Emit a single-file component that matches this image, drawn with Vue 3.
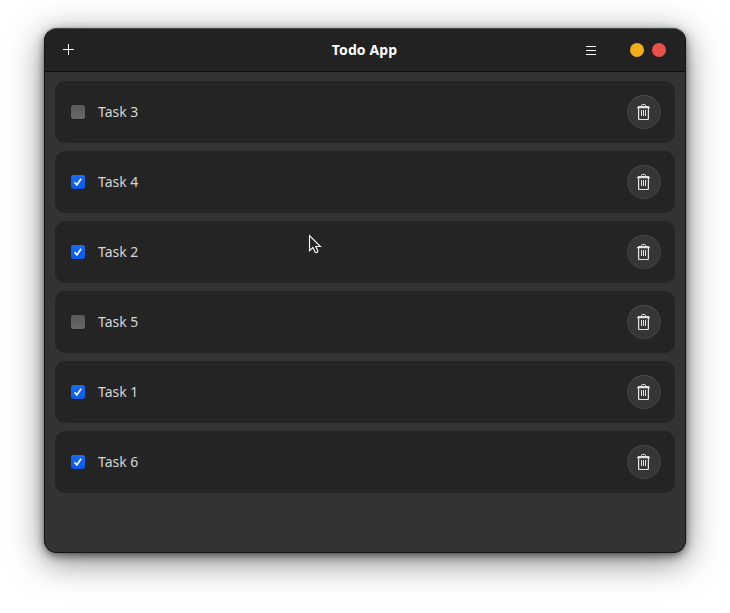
<script setup>
import { ref } from 'vue'

const tasks = ref([
  { name: 'Task 3', done: false },
  { name: 'Task 4', done: true },
  { name: 'Task 2', done: true },
  { name: 'Task 5', done: false },
  { name: 'Task 1', done: true },
  { name: 'Task 6', done: true },
])

function remove(index) {
  tasks.value.splice(index, 1)
}
</script>

<template>
  <div class="desktop">
    <main class="window">
      <header class="header">
        <button class="flat add" aria-label="Add">
          <svg width="11" height="11" viewBox="0 0 11 11"><path d="M5.5 0v11M0 5.5h11" stroke="#fff" /></svg>
        </button>
        <h1 class="title">Todo App</h1>
        <div class="controls">
          <button class="flat menu" aria-label="Menu">
            <svg width="10" height="9" viewBox="0 0 10 9"><path d="M0 .5h10M0 4.5h10M0 8.5h10" stroke="#fff" /></svg>
          </button>
          <button class="dot yellow" aria-label="Minimize"></button>
          <button class="dot red" aria-label="Close"></button>
        </div>
      </header>
      <ul class="list">
        <li v-for="(task, i) in tasks" :key="task.name" class="card">
          <label class="task">
            <input v-model="task.done" type="checkbox" class="native" />
            <span class="check" :class="{ on: task.done }">
              <svg v-if="task.done" width="14" height="14" viewBox="0 0 14 14">
                <path d="M3.6 7.4l2.3 2.5 4.2-6.2" fill="none" stroke="#fff" stroke-width="1.7" />
              </svg>
            </span>
            <span class="name">{{ task.name }}</span>
          </label>
          <button class="trash" aria-label="Delete" @click="remove(i)">
            <svg width="14" height="16" viewBox="0 0 14 16" fill="none" stroke="#e4e4e4">
              <path d="M4.5 2.5v-1q0-1 1-1h2q1 0 1 1v1" />
              <path d="M1 2.5h11" />
              <path d="M0 3.6h13" stroke-width="1.3" />
              <path d="M1.6 4v10.5q0 1 1 1h7.8q1 0 1-1V4" stroke-width="1.2" />
              <path d="M4.5 6v6M6.5 6v6M8.5 6v6" />
            </svg>
          </button>
        </li>
      </ul>
    </main>
    <svg class="cursor" width="14" height="21" viewBox="0 0 14 21">
      <path d="M1.5 1.5v15.2l3.4-3.2 2.2 4.4q1 1.2 2.2.4.9-.7.4-1.7l-2-4.1h4.7z" fill="#242424" stroke="#fff" stroke-width="1.1" />
    </svg>
  </div>
</template>

<style>
body {
  background: #fff;
}
</style>

<style scoped>
.desktop {
  position: relative;
  box-sizing: border-box;
  height: 613px;
  padding: 28px 44px 60px;
  overflow: hidden;
  font-family: "Noto Sans", "Open Sans", sans-serif;
}
.window {
  box-sizing: border-box;
  height: 525px;
  border: 1px solid #151515;
  border-top-color: #454b4a;
  border-radius: 13px;
  overflow: hidden;
  background: #333;
  box-shadow: 0 0 1px rgba(0, 0, 0, 0.5), 0 3px 9px rgba(0, 0, 0, 0.5), 0 8px 34px rgba(0, 0, 0, 0.5);
}
.header {
  box-sizing: border-box;
  height: 43px;
  display: grid;
  grid-template-columns: 1fr auto 1fr;
  align-items: center;
  padding: 0 19px 0 18px;
  background: #222;
  border-bottom: 1px solid #0d0d0d;
}
button {
  display: flex;
  align-items: center;
  justify-content: center;
  padding: 0;
  border: 0;
  background: none;
}
.flat svg {
  display: block;
}
.add {
  justify-self: start;
  padding-bottom: 1px;
}
.title {
  margin: 0;
  color: #fff;
  font-size: 14px;
  font-weight: 700;
  letter-spacing: 0.1px;
  line-height: 20px;
}
.controls {
  display: flex;
  align-items: center;
  justify-content: flex-end;
  gap: 8px;
}
.menu {
  margin-right: 26px;
}
.dot {
  width: 14px;
  height: 14px;
  border-radius: 50%;
}
.yellow {
  background: #f2ae1b;
}
.red {
  background: #ea5149;
}
.list {
  display: flex;
  flex-direction: column;
  gap: 8px;
  margin: 0;
  padding: 9px 10px;
  list-style: none;
}
.card {
  box-sizing: border-box;
  height: 62px;
  display: flex;
  align-items: center;
  justify-content: space-between;
  padding: 0 14px 0 16px;
  border-radius: 10px;
  background: #242424;
}
.task {
  display: flex;
  align-items: center;
  gap: 13px;
}
.native {
  display: none;
}
.check {
  width: 14px;
  height: 14px;
  border-radius: 2.5px;
  background: linear-gradient(#595959, #686868);
  box-shadow: 0 1px 1px rgba(0, 0, 0, 0.25);
}
.check.on {
  background: linear-gradient(#1a6bf7, #0859e6);
}
.check svg {
  display: block;
}
.name {
  color: #d6d6d6;
  font-size: 14px;
  line-height: 20px;
}
.trash {
  box-sizing: border-box;
  width: 34px;
  height: 34px;
  border: 1px solid #424242;
  border-top-color: #4c4c4c;
  border-radius: 50%;
  background: #363636;
}
.cursor {
  position: absolute;
  left: 308px;
  top: 234px;
}
</style>
